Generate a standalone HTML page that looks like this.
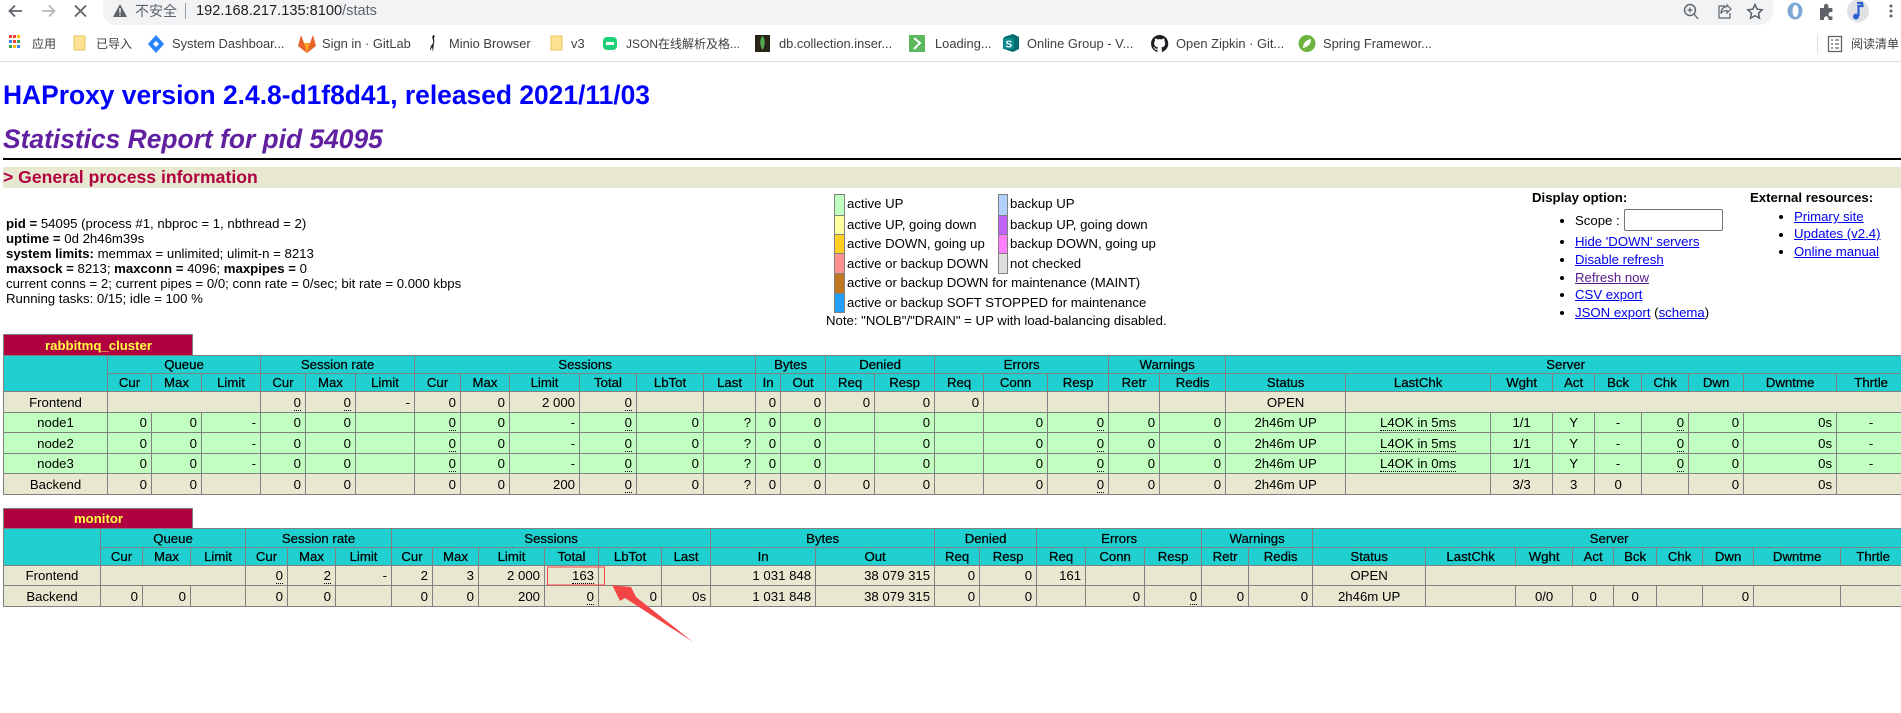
<!DOCTYPE html>
<html>
<head>
<meta charset="utf-8">
<title>Statistics Report for HAProxy</title>
<style>
html,body{margin:0;padding:0;background:#fff;width:1901px;height:713px;overflow:hidden}
body{position:relative;font:13.2px "Liberation Sans","Noto Sans CJK SC",Arial,sans-serif;color:#000}
.a{position:absolute;white-space:nowrap;line-height:16px}
.b{position:absolute;white-space:nowrap;font-size:12px;line-height:16px;top:36px;color:#3c4043;font-family:"Liberation Sans","Noto Sans CJK SC",sans-serif}
.b.la{font-size:12.900px}
svg{position:absolute;overflow:visible}
a,.l{color:#0000ee;text-decoration:underline}
.dot{position:absolute;width:4px;height:4px;border-radius:50%;background:#000}
table{position:absolute;left:3px;border-collapse:collapse;table-layout:fixed;font-size:13.2px;line-height:15px}
th,td{border:1px solid #808080;padding:0 4px;overflow:hidden;white-space:nowrap;box-sizing:border-box}
th{background:#20d0d0;font-weight:400;text-align:center;-webkit-text-stroke:.25px #000}
td{text-align:right;background:#e8e8d0}
tr.u td{background:#c0ffc0}
td.c{text-align:center}
u{text-decoration:none;border-bottom:1px dotted #000}
.pn{position:absolute;left:3px;width:190px;box-sizing:border-box;background:#b00040;color:#ffff40;font-weight:700;text-align:center;border:1px solid #808080;border-bottom:0;padding-left:1px}
</style>
</head>
<body>

<!-- browser toolbar -->
<div style="position:absolute;left:103px;top:0;width:1670px;height:25px;background:#f1f3f4;border-radius:0 0 13px 13px"></div>
<svg style="left:0;top:0" width="200" height="25" viewBox="0 0 200 25">
<path d="M22 11H10M15 5.500L9.500 11l5.500 5.500" fill="none" stroke="#5f6368" stroke-width="1.800"/>
<path d="M42 11H54M49 5.500L54.500 11 49 16.500" fill="none" stroke="#b5b8bb" stroke-width="1.800"/>
<path d="M75 5.500L86 16.500M86 5.500L75 16.500" fill="none" stroke="#5f6368" stroke-width="1.800"/>
<path d="M120 4L127 17H113Z" fill="#5f6368"/><rect x="119.300" y="8" width="1.400" height="5" fill="#f1f3f4"/><rect x="119.300" y="14" width="1.400" height="1.500" fill="#f1f3f4"/>
<rect x="185" y="3" width="1" height="16" fill="#9aa0a6"/>
</svg>
<div class="a" style="left:135px;top:3px;font-size:14px;color:#5f6368">不安全</div>
<div class="a" style="left:196px;top:3px;font-size:14.600px;color:#202124">192.168.217.135:8100<span style="color:#5f6368">/stats</span></div>

<svg style="left:1680px;top:0" width="221" height="25" viewBox="1680 0 221 25">
<circle cx="1690" cy="10" r="5.500" fill="none" stroke="#5f6368" stroke-width="1.400"/><path d="M1694 14l4 5M1687.500 10h5M1690 7.500v5" stroke="#5f6368" stroke-width="1.300" fill="none"/>
<path d="M1727 5l4 4-4 4v-2.500c-3 0-5 1-6 3 0-4 2-6.500 6-7ZM1725 6h-6v12h11v-5" fill="none" stroke="#5f6368" stroke-width="1.200"/>
<path d="M1755 4.500l2.200 4.700 5 .6-3.700 3.400 1 5-4.500-2.500-4.500 2.500 1-5-3.700-3.400 5-.6Z" fill="none" stroke="#5f6368" stroke-width="1.500"/>
<ellipse cx="1795" cy="11" rx="7.500" ry="8.500" fill="#7da9d8"/><ellipse cx="1795.500" cy="11" rx="3" ry="6" fill="#fff"/>
<path d="M1820 8h4v-2a2.200 2.200 0 0 1 4.400 0v2h4v4h-2a2.300 2.300 0 0 0 0 4.500h2v3.500h-4v-1.500a2.200 2.200 0 0 0-4.400 0V20h-4Z" fill="#5f6368"/>
<ellipse cx="1858" cy="11" rx="11" ry="11.500" fill="#dfe1e5"/>
<path d="M1857 3h5l.5 3h-4v10" fill="none" stroke="#2f5fcf" stroke-width="2.200"/><circle cx="1856" cy="16.500" r="3" fill="#2f5fcf"/>
<circle cx="1891" cy="6" r="1.500" fill="#5f6368"/><circle cx="1891" cy="11" r="1.500" fill="#5f6368"/><circle cx="1891" cy="16" r="1.500" fill="#5f6368"/>
</svg>

<!-- bookmarks -->
<svg style="left:0;top:25px" width="1901" height="37" viewBox="0 25 1901 37">
<g>
<rect x="9" y="35" width="3" height="3" fill="#ea4335"/><rect x="13" y="35" width="3" height="3" fill="#ea4335"/><rect x="17" y="35" width="3" height="3" fill="#fbbc04"/>
<rect x="9" y="40" width="3" height="3" fill="#4285f4"/><rect x="13" y="40" width="3" height="3" fill="#ea4335"/><rect x="17" y="40" width="3" height="3" fill="#34a853"/>
<rect x="9" y="45" width="3" height="3" fill="#34a853"/><rect x="13" y="45" width="3" height="3" fill="#fbbc04"/><rect x="17" y="45" width="3" height="3" fill="#4285f4"/>
</g>
<path d="M74 36h11v14H74Z" fill="#fde293" stroke="#e8c55c"/>
<path d="M156 35l8 9-8 9-8-9Z" fill="#2684ff"/><path d="M156 41l3 3-3 3-3-3Z" fill="#fff"/>
<path d="M307 53l-9-7 3-11 3 8h6l3-8 3 11Z" fill="#e8612c"/><path d="M307 53l-3-10h6Z" fill="#fca326"/>
<path d="M433 35c-2 3 1 5 0 8-1 2-3 3-3 8l2-4 1 5 1-9c1-3-1-5 1-7Z" fill="#222"/>
<path d="M551 36h11v14H551Z" fill="#fde293" stroke="#e8c55c"/>
<rect x="603" y="37" width="14" height="13" rx="4" fill="#1fd07a"/><rect x="606" y="42" width="8" height="3" fill="#fff"/>
<rect x="755" y="35" width="15" height="17" fill="#2a2418"/><path d="M762.500 36c3 3 3 9 0 14-3-5-3-11 0-14Z" fill="#4fa94d"/>
<rect x="909" y="35" width="16" height="17" fill="#5cb85c"/><path d="M914 38l6 5-6 6" fill="none" stroke="#fff" stroke-width="2"/>
<path d="M1004 37l9-3 6 3v12l-6 3-9-3Z" fill="#036c70"/><rect x="1003" y="38" width="11" height="11" fill="#0b8a8e"/>
<text x="1005.500" y="47.500" font-size="10" font-weight="700" fill="#fff" font-family="Liberation Sans">S</text>
<path transform="translate(1151 35) scale(1.080)" fill="#1b1f23" d="M8 0C3.580 0 0 3.580 0 8c0 3.540 2.290 6.530 5.470 7.590.4.070.55-.17.55-.38 0-.19-.01-.82-.01-1.490-2.010.37-2.530-.49-2.690-.94-.09-.23-.48-.94-.82-1.130-.28-.15-.68-.52-.01-.53.63-.01 1.080.58 1.230.82.72 1.210 1.870.87 2.330.66.07-.52.28-.87.51-1.070-1.780-.2-3.640-.89-3.640-3.950 0-.87.31-1.590.82-2.150-.08-.2-.36-1.020.08-2.120 0 0 .67-.21 2.200.82.64-.18 1.320-.27 2-.27.68 0 1.360.09 2 .27 1.530-1.040 2.200-.82 2.200-.82.44 1.100.16 1.920.08 2.120.51.56.82 1.270.82 2.150 0 3.070-1.870 3.750-3.650 3.950.29.25.54.73.54 1.480 0 1.070-.01 1.930-.01 2.200 0 .21.15.46.55.38A8.013 8.013 0 0016 8c0-4.420-3.580-8-8-8z"/>
<circle cx="1307" cy="43.500" r="8.500" fill="#6db33f"/><path d="M1303 48c0-5 3-8 8-9 0 5-3 8-8 9Z" fill="#fff"/>
<rect x="1817" y="35" width="1" height="18" fill="#dadce0"/>
<rect x="1828.500" y="36.500" width="13" height="15" fill="none" stroke="#5f6368" stroke-width="1.300"/><path d="M1831 40h2M1831 44h2M1831 48h2M1835 40h4M1835 44h4M1835 48h4" stroke="#5f6368" stroke-width="1.300"/>
<rect x="0" y="61" width="1901" height="1" fill="#dadce0"/>
</svg>
<div class="b" style="left:32px">应用</div>
<div class="b" style="left:96px">已导入</div>
<div class="b la" style="left:172px">System Dashboar...</div>
<div class="b la" style="left:322px">Sign in · GitLab</div>
<div class="b la" style="left:449px">Minio Browser</div>
<div class="b la" style="left:571px">v3</div>
<div class="b" style="left:626px">JSON在线解析及格...</div>
<div class="b la" style="left:779px">db.collection.inser...</div>
<div class="b la" style="left:935px">Loading...</div>
<div class="b la" style="left:1027px">Online Group - V...</div>
<div class="b la" style="left:1176px">Open Zipkin · Git...</div>
<div class="b la" style="left:1323px">Spring Framewor...</div>
<div class="b" style="left:1851px">阅读清单</div>

<!-- headings -->
<div class="a" style="left:3px;top:80px;font-size:26.400px;line-height:30px;font-weight:700;color:#0000ff">HAProxy version 2.4.8-d1f8d41, released 2021/11/03</div>
<div class="a" style="left:3px;top:125px;font-size:26.400px;line-height:28px;font-weight:700;font-style:italic;color:#6020a0">Statistics Report for pid 54095</div>
<div style="position:absolute;left:3px;top:158px;width:1898px;height:2px;background:#000"></div>
<div style="position:absolute;left:3px;top:167px;width:1898px;height:21px;background:#e8e8d0"></div>
<div class="a" style="left:3px;top:167px;font-size:17.600px;line-height:20px;font-weight:700;color:#b00040">&gt; General process information</div>

<!-- process info -->
<div class="a" style="left:6px;top:216px;line-height:15px">
<b>pid = </b>54095 (process #1, nbproc = 1, nbthread = 2)<br>
<b>uptime = </b>0d 2h46m39s<br>
<b>system limits:</b> memmax = unlimited; ulimit-n = 8213<br>
<b>maxsock = </b>8213; <b>maxconn = </b>4096; <b>maxpipes = </b>0<br>
current conns = 2; current pipes = 0/0; conn rate = 0/sec; bit rate = 0.000 kbps<br>
Running tasks: 0/15; idle = 100 %
</div>

<!-- legend -->
<div style="position:absolute;left:834px;top:194px;width:11px;height:119px;background:#808080"></div>
<div style="position:absolute;left:835px;top:195px;width:9px;height:20px;background:#c0ffc0"></div>
<div style="position:absolute;left:835px;top:216px;width:9px;height:18px;background:#ffffa0"></div>
<div style="position:absolute;left:835px;top:235px;width:9px;height:18px;background:#ffd020"></div>
<div style="position:absolute;left:835px;top:254px;width:9px;height:19px;background:#ff9090"></div>
<div style="position:absolute;left:835px;top:274px;width:9px;height:19px;background:#c07820"></div>
<div style="position:absolute;left:835px;top:294px;width:9px;height:18px;background:#20a0ff"></div>
<div style="position:absolute;left:998px;top:194px;width:10px;height:80px;background:#808080"></div>
<div style="position:absolute;left:999px;top:195px;width:8px;height:20px;background:#b0d0ff"></div>
<div style="position:absolute;left:999px;top:216px;width:8px;height:18px;background:#c060ff"></div>
<div style="position:absolute;left:999px;top:235px;width:8px;height:18px;background:#ff80ff"></div>
<div style="position:absolute;left:999px;top:254px;width:8px;height:19px;background:#e0e0e0"></div>
<div class="a" style="left:847px;top:196px">active UP</div>
<div class="a" style="left:847px;top:217px">active UP, going down</div>
<div class="a" style="left:847px;top:236px">active DOWN, going up</div>
<div class="a" style="left:847px;top:256px">active or backup DOWN</div>
<div class="a" style="left:847px;top:275px">active or backup DOWN for maintenance (MAINT)</div>
<div class="a" style="left:847px;top:295px">active or backup SOFT STOPPED for maintenance</div>
<div class="a" style="left:826px;top:313px">Note: "NOLB"/"DRAIN" = UP with load-balancing disabled.</div>
<div class="a" style="left:1010px;top:196px">backup UP</div>
<div class="a" style="left:1010px;top:217px">backup UP, going down</div>
<div class="a" style="left:1010px;top:236px">backup DOWN, going up</div>
<div class="a" style="left:1010px;top:256px">not checked</div>

<!-- display options -->
<div class="a" style="left:1532px;top:190px"><b>Display option:</b></div>
<div class="dot" style="left:1560px;top:219px"></div>
<div class="a" style="left:1575px;top:213px">Scope :</div>
<div style="position:absolute;left:1624px;top:209px;width:99px;height:22px;box-sizing:border-box;border:1px solid #767676;border-radius:2px;background:#fff"></div>
<div class="dot" style="left:1560px;top:240px"></div><div class="a" style="left:1575px;top:234px"><span class="l">Hide 'DOWN' servers</span></div>
<div class="dot" style="left:1560px;top:258px"></div><div class="a" style="left:1575px;top:252px"><span class="l">Disable refresh</span></div>
<div class="dot" style="left:1560px;top:276px"></div><div class="a" style="left:1575px;top:270px"><span class="l" style="color:#551a8b">Refresh now</span></div>
<div class="dot" style="left:1560px;top:293px"></div><div class="a" style="left:1575px;top:287px"><span class="l">CSV export</span></div>
<div class="dot" style="left:1560px;top:311px"></div><div class="a" style="left:1575px;top:305px"><span class="l">JSON export</span> (<span class="l">schema</span>)</div>

<div class="a" style="left:1750px;top:190px"><b>External resources:</b></div>
<div class="dot" style="left:1779px;top:215px"></div><div class="a" style="left:1794px;top:209px"><span class="l">Primary site</span></div>
<div class="dot" style="left:1779px;top:233px"></div><div class="a" style="left:1794px;top:226px"><span class="l">Updates (v2.4)</span></div>
<div class="dot" style="left:1779px;top:250px"></div><div class="a" style="left:1794px;top:244px"><span class="l">Online manual</span></div>

<!-- table 1 -->
<div class="pn" style="top:334px;height:21px;line-height:21px">rabbitmq_cluster</div>
<table style="top:355px;width:1902px">
<colgroup><col style="width:104px"><col style="width:44px"><col style="width:50px"><col style="width:59px"><col style="width:45px"><col style="width:50px"><col style="width:59px"><col style="width:46px"><col style="width:49px"><col style="width:70px"><col style="width:57px"><col style="width:67px"><col style="width:52px"><col style="width:25px"><col style="width:45px"><col style="width:49px"><col style="width:60px"><col style="width:49px"><col style="width:64px"><col style="width:61px"><col style="width:51px"><col style="width:66px"><col style="width:120px"><col style="width:145px"><col style="width:62px"><col style="width:42px"><col style="width:47px"><col style="width:47px"><col style="width:55px"><col style="width:93px"><col style="width:69px"></colgroup>
<tr style="height:18px"><th rowspan="2"></th><th colspan="3">Queue</th><th colspan="3">Session rate</th><th colspan="6">Sessions</th><th colspan="2">Bytes</th><th colspan="2">Denied</th><th colspan="3">Errors</th><th colspan="2">Warnings</th><th colspan="9">Server</th></tr>
<tr style="height:18px"><th>Cur</th><th>Max</th><th>Limit</th><th>Cur</th><th>Max</th><th>Limit</th><th>Cur</th><th>Max</th><th>Limit</th><th>Total</th><th>LbTot</th><th>Last</th><th>In</th><th>Out</th><th>Req</th><th>Resp</th><th>Req</th><th>Conn</th><th>Resp</th><th>Retr</th><th>Redis</th><th>Status</th><th>LastChk</th><th>Wght</th><th>Act</th><th>Bck</th><th>Chk</th><th>Dwn</th><th>Dwntme</th><th>Thrtle</th></tr>
<tr style="height:21px"><td class="c">Frontend</td><td colspan="3"></td><td><u>0</u></td><td><u>0</u></td><td>-</td><td>0</td><td>0</td><td>2 000</td><td><u>0</u></td><td></td><td></td><td>0</td><td>0</td><td>0</td><td>0</td><td>0</td><td></td><td></td><td></td><td></td><td class="c">OPEN</td><td colspan="8"></td></tr>
<tr class="u" style="height:20px"><td class="c">node1</td><td>0</td><td>0</td><td>-</td><td>0</td><td>0</td><td></td><td><u>0</u></td><td>0</td><td>-</td><td><u>0</u></td><td>0</td><td>?</td><td>0</td><td>0</td><td></td><td>0</td><td></td><td>0</td><td><u>0</u></td><td>0</td><td>0</td><td class="c">2h46m UP</td><td class="c"><u>L4OK in 5ms</u></td><td class="c">1/1</td><td class="c">Y</td><td class="c">-</td><td><u>0</u></td><td>0</td><td>0s</td><td class="c">-</td></tr>
<tr class="u" style="height:21px"><td class="c">node2</td><td>0</td><td>0</td><td>-</td><td>0</td><td>0</td><td></td><td><u>0</u></td><td>0</td><td>-</td><td><u>0</u></td><td>0</td><td>?</td><td>0</td><td>0</td><td></td><td>0</td><td></td><td>0</td><td><u>0</u></td><td>0</td><td>0</td><td class="c">2h46m UP</td><td class="c"><u>L4OK in 5ms</u></td><td class="c">1/1</td><td class="c">Y</td><td class="c">-</td><td><u>0</u></td><td>0</td><td>0s</td><td class="c">-</td></tr>
<tr class="u" style="height:20px"><td class="c">node3</td><td>0</td><td>0</td><td>-</td><td>0</td><td>0</td><td></td><td><u>0</u></td><td>0</td><td>-</td><td><u>0</u></td><td>0</td><td>?</td><td>0</td><td>0</td><td></td><td>0</td><td></td><td>0</td><td><u>0</u></td><td>0</td><td>0</td><td class="c">2h46m UP</td><td class="c"><u>L4OK in 0ms</u></td><td class="c">1/1</td><td class="c">Y</td><td class="c">-</td><td><u>0</u></td><td>0</td><td>0s</td><td class="c">-</td></tr>
<tr style="height:21px"><td class="c">Backend</td><td>0</td><td>0</td><td></td><td>0</td><td>0</td><td></td><td>0</td><td>0</td><td>200</td><td><u>0</u></td><td>0</td><td>?</td><td>0</td><td>0</td><td>0</td><td>0</td><td></td><td>0</td><td><u>0</u></td><td>0</td><td>0</td><td class="c">2h46m UP</td><td></td><td class="c">3/3</td><td class="c">3</td><td class="c">0</td><td></td><td>0</td><td>0s</td><td></td></tr>
</table>

<!-- table 2 -->
<div class="pn" style="top:508px;height:20px;line-height:20px">monitor</div>
<table style="top:528px;width:1902px">
<colgroup><col style="width:97px"><col style="width:42px"><col style="width:48px"><col style="width:55px"><col style="width:42px"><col style="width:48px"><col style="width:56px"><col style="width:41px"><col style="width:46px"><col style="width:66px"><col style="width:54px"><col style="width:63px"><col style="width:49px"><col style="width:105px"><col style="width:119px"><col style="width:45px"><col style="width:57px"><col style="width:49px"><col style="width:59px"><col style="width:57px"><col style="width:47px"><col style="width:64px"><col style="width:113px"><col style="width:90px"><col style="width:57px"><col style="width:41px"><col style="width:43px"><col style="width:46px"><col style="width:51px"><col style="width:87px"><col style="width:65px"></colgroup>
<tr style="height:19px"><th rowspan="2"></th><th colspan="3">Queue</th><th colspan="3">Session rate</th><th colspan="6">Sessions</th><th colspan="2">Bytes</th><th colspan="2">Denied</th><th colspan="3">Errors</th><th colspan="2">Warnings</th><th colspan="9">Server</th></tr>
<tr style="height:18px"><th>Cur</th><th>Max</th><th>Limit</th><th>Cur</th><th>Max</th><th>Limit</th><th>Cur</th><th>Max</th><th>Limit</th><th>Total</th><th>LbTot</th><th>Last</th><th>In</th><th>Out</th><th>Req</th><th>Resp</th><th>Req</th><th>Conn</th><th>Resp</th><th>Retr</th><th>Redis</th><th>Status</th><th>LastChk</th><th>Wght</th><th>Act</th><th>Bck</th><th>Chk</th><th>Dwn</th><th>Dwntme</th><th>Thrtle</th></tr>
<tr style="height:20px"><td class="c">Frontend</td><td colspan="3"></td><td><u>0</u></td><td><u>2</u></td><td>-</td><td>2</td><td>3</td><td>2 000</td><td><u>163</u></td><td></td><td></td><td>1 031 848</td><td>38 079 315</td><td>0</td><td>0</td><td>161</td><td></td><td></td><td></td><td></td><td class="c">OPEN</td><td colspan="8"></td></tr>
<tr style="height:21px"><td class="c">Backend</td><td>0</td><td>0</td><td></td><td>0</td><td>0</td><td></td><td>0</td><td>0</td><td>200</td><td><u>0</u></td><td>0</td><td>0s</td><td>1 031 848</td><td>38 079 315</td><td>0</td><td>0</td><td></td><td>0</td><td><u>0</u></td><td>0</td><td>0</td><td class="c">2h46m UP</td><td></td><td class="c">0/0</td><td class="c">0</td><td class="c">0</td><td></td><td>0</td><td></td><td></td></tr>
</table>

<!-- annotation -->
<svg style="left:0;top:0" width="1901" height="713" viewBox="0 0 1901 713">
<rect x="547.500" y="567" width="57" height="18" fill="none" stroke="#f44747" stroke-width="1"/>
<polygon points="612.300,585.300 631,587 636,597 693,642 625,598 620,601" fill="#f44545"/>
</svg>
</body>
</html>
